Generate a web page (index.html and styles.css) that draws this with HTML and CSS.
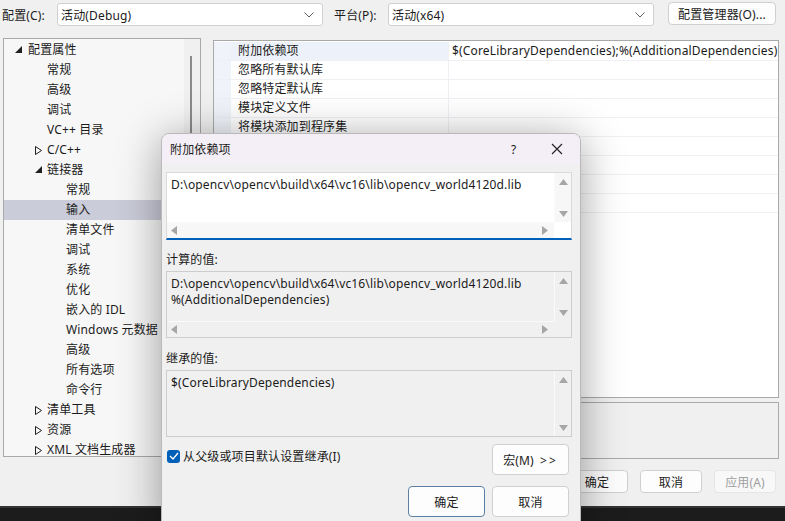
FILE: index.html
```html
<!DOCTYPE html>
<html lang="zh-CN">
<head>
<meta charset="utf-8">
<title>属性页</title>
<link rel="stylesheet" href="styles.css">
</head>
<body>
<div class="window">
  <div class="topbar">
    <span class="lbl">配置(C):</span>
    <div class="combo"><span>活动(Debug)</span><svg class="chev" width="10" height="6" viewBox="0 0 10 6"><polyline points="0.5,0.5 5,5 9.5,0.5" fill="none" stroke="#606060" stroke-width="1"/></svg></div>
    <span class="lbl lbl2">平台(P):</span>
    <div class="combo"><span>活动(x64)</span><svg class="chev" width="10" height="6" viewBox="0 0 10 6"><polyline points="0.5,0.5 5,5 9.5,0.5" fill="none" stroke="#606060" stroke-width="1"/></svg></div>
    <button class="btn cfgmgr">配置管理器(O)...</button>
  </div>

  <div class="main">
    <div class="tree">
      <div class="tree-items">
        <div class="ti t1"><svg class="tri" width="7" height="7" viewBox="0 0 7 7"><polygon points="7,0 7,7 0,7" fill="#202020"/></svg>配置属性</div>
        <div class="ti t2">常规</div>
        <div class="ti t2">高级</div>
        <div class="ti t2">调试</div>
        <div class="ti t2">VC++ 目录</div>
        <div class="ti t2"><svg class="tri" width="7" height="9" viewBox="0 0 7 9"><polygon points="0.5,0.5 6.5,4.5 0.5,8.5" fill="none" stroke="#202020" stroke-width="1"/></svg>C/C++</div>
        <div class="ti t2"><svg class="tri" width="7" height="7" viewBox="0 0 7 7"><polygon points="7,0 7,7 0,7" fill="#202020"/></svg>链接器</div>
        <div class="ti t3">常规</div>
        <div class="ti t3 sel">输入</div>
        <div class="ti t3">清单文件</div>
        <div class="ti t3">调试</div>
        <div class="ti t3">系统</div>
        <div class="ti t3">优化</div>
        <div class="ti t3">嵌入的 IDL</div>
        <div class="ti t3">Windows 元数据</div>
        <div class="ti t3">高级</div>
        <div class="ti t3">所有选项</div>
        <div class="ti t3">命令行</div>
        <div class="ti t2"><svg class="tri" width="7" height="9" viewBox="0 0 7 9"><polygon points="0.5,0.5 6.5,4.5 0.5,8.5" fill="none" stroke="#202020" stroke-width="1"/></svg>清单工具</div>
        <div class="ti t2"><svg class="tri" width="7" height="9" viewBox="0 0 7 9"><polygon points="0.5,0.5 6.5,4.5 0.5,8.5" fill="none" stroke="#202020" stroke-width="1"/></svg>资源</div>
        <div class="ti t2"><svg class="tri" width="7" height="9" viewBox="0 0 7 9"><polygon points="0.5,0.5 6.5,4.5 0.5,8.5" fill="none" stroke="#202020" stroke-width="1"/></svg>XML 文档生成器</div>
      </div>
      <div class="tree-scroll"><div class="thumb"></div></div>
    </div>

    <div class="right">
      <div class="grid">
        <div class="row first"><div class="gut"></div><div class="name">附加依赖项</div><div class="val">$(CoreLibraryDependencies);%(AdditionalDependencies)</div></div>
        <div class="row"><div class="gut"></div><div class="name">忽略所有默认库</div><div class="val"></div></div>
        <div class="row"><div class="gut"></div><div class="name">忽略特定默认库</div><div class="val"></div></div>
        <div class="row"><div class="gut"></div><div class="name">模块定义文件</div><div class="val"></div></div>
        <div class="row"><div class="gut"></div><div class="name">将模块添加到程序集</div><div class="val"></div></div>
        <div class="row"><div class="gut"></div><div class="name"></div><div class="val"></div></div>
        <div class="row"><div class="gut"></div><div class="name"></div><div class="val"></div></div>
        <div class="row"><div class="gut"></div><div class="name"></div><div class="val"></div></div>
        <div class="row"><div class="gut"></div><div class="name"></div><div class="val"></div></div>
        <div class="grid-fill"><div class="gut"></div></div>
      </div>
      <div class="desc"></div>
    </div>
  </div>

  <div class="bottom-buttons">
    <button class="btn bb">确定</button>
    <button class="btn bb">取消</button>
    <button class="btn bb disabled">应用(A)</button>
  </div>
  <div class="darkstrip"></div>

  <div class="dialog">
    <div class="dtitle">
      <span class="dt-text">附加依赖项</span>
      <span class="dt-help">?</span>
      <svg class="dt-close" width="12" height="12" viewBox="0 0 12 12"><path d="M1 1 L11 11 M11 1 L1 11" stroke="#202020" stroke-width="1.1" fill="none"/></svg>
    </div>
    <div class="dbody">
      <div class="edit e1">
        <div class="etext">D:\opencv\opencv\build\x64\vc16\lib\opencv_world4120d.lib</div>
        <div class="vscroll">
          <svg width="9" height="6" viewBox="0 0 9 6"><polygon points="4.5,0 9,6 0,6" fill="#a6a6a6"/></svg>
          <svg width="9" height="6" viewBox="0 0 9 6"><polygon points="0,0 9,0 4.5,6" fill="#a6a6a6"/></svg>
        </div>
        <div class="hscroll">
          <svg width="6" height="9" viewBox="0 0 6 9"><polygon points="0,4.5 6,0 6,9" fill="#a6a6a6"/></svg>
          <svg width="6" height="9" viewBox="0 0 6 9"><polygon points="0,0 6,4.5 0,9" fill="#a6a6a6"/></svg>
        </div>
      </div>

      <div class="dlabel">计算的值:</div>
      <div class="edit e2 ro">
        <div class="etext">D:\opencv\opencv\build\x64\vc16\lib\opencv_world4120d.lib<br>%(AdditionalDependencies)</div>
        <div class="vscroll">
          <svg width="9" height="6" viewBox="0 0 9 6"><polygon points="4.5,0 9,6 0,6" fill="#a6a6a6"/></svg>
          <svg width="9" height="6" viewBox="0 0 9 6"><polygon points="0,0 9,0 4.5,6" fill="#a6a6a6"/></svg>
        </div>
        <div class="hscroll">
          <svg width="6" height="9" viewBox="0 0 6 9"><polygon points="0,4.5 6,0 6,9" fill="#a6a6a6"/></svg>
          <svg width="6" height="9" viewBox="0 0 6 9"><polygon points="0,0 6,4.5 0,9" fill="#a6a6a6"/></svg>
        </div>
      </div>

      <div class="dlabel dlabel3">继承的值:</div>
      <div class="edit e3 ro">
        <div class="etext">$(CoreLibraryDependencies)</div>
        <div class="vscroll full">
          <svg width="9" height="6" viewBox="0 0 9 6"><polygon points="4.5,0 9,6 0,6" fill="#a6a6a6"/></svg>
          <svg width="9" height="6" viewBox="0 0 9 6"><polygon points="0,0 9,0 4.5,6" fill="#a6a6a6"/></svg>
        </div>
      </div>

      <div class="optrow">
        <label class="chk"><span class="box"><svg width="10" height="8" viewBox="0 0 10 8"><polyline points="1,4 4,7 9,1" fill="none" stroke="#fff" stroke-width="1.3"/></svg></span>从父级或项目默认设置继承(I)</label>
        <button class="btn dbtn">宏(M) <span class="gts">&gt;&gt;</span></button>
      </div>
      <div class="okrow">
        <button class="btn dbtn default">确定</button>
        <button class="btn dbtn">取消</button>
      </div>
    </div>
  </div>
</div>
</body>
</html>
```

FILE: styles.css
```css
* { box-sizing: border-box; }
html, body { margin: 0; padding: 0; }
body {
  background: #f0f0f0;
  font-family: "Noto Sans", "Noto Sans CJK SC", sans-serif;
  font-size: 12px;
  letter-spacing: 0.15px;
  color: #1b1b1b;
  width: 785px;
  height: 521px;
  overflow: hidden;
}
.window { position: relative; width: 785px; height: 521px; overflow: hidden; }

.topbar { display: flex; align-items: center; height: 29px; padding-left: 2px; }
.lbl { width: 55px; }
.lbl2 { width: 54px; margin-left: 11px; }
.combo {
  width: 266px; height: 23px; background: #fff; border: 1px solid #d0d0d0; border-radius: 3px;
  display: flex; align-items: center; justify-content: space-between; padding: 0 8px 0 3px;
}
.btn {
  font-family: inherit; font-size: 12px; letter-spacing: 0.15px; color: #1b1b1b; background: #fdfdfd;
  border: 1px solid #d0d0d0; border-radius: 4px; padding: 0; cursor: default;
}
.cfgmgr { width: 108px; height: 23px; margin-left: 14px; margin-top: -2px; }

.main { display: flex; align-items: flex-start; padding-left: 3px; margin-top: 9px; }
.tree {
  width: 198px; height: 419px; border: 1px solid #a9a9a9; background: #f7f7f7;
  display: flex; position: relative;
}
.tree-items { flex: 1; padding-top: 1px; }
.ti { height: 20px; line-height: 20px; position: relative; white-space: nowrap; }
.ti .tri { position: absolute; top: 6px; }
.t1 { padding-left: 24px; }
.t1 .tri { left: 11px; }
.t2 { padding-left: 43px; }
.t2 .tri { left: 31px; }
.t3 { padding-left: 62px; }
.sel { background: #cbccd9; }
.tree-scroll { width: 16px; background: #f0f0f0; padding-top: 17px; }
.thumb { width: 2px; height: 320px; background: #8a8a8a; margin-left: 6px; }

.right { margin-left: 12px; width: 566px; margin-top: 2px; }
.grid { height: 358px; border: 1px solid #a9a9a9; background: #fff; display: flex; flex-direction: column; }
.row { display: flex; height: 19px; line-height: 18px; border-bottom: 1px solid #f0f0f4; }
.row.first { margin-top: 1px; }
.gut { width: 17px; background: #f0f4fa; flex: none; }
.name { width: 218px; padding-left: 7px; border-right: 1px solid #f0f0f4; white-space: nowrap; overflow: hidden; }
.row.first .name { background: #edf2fa; }
.val { flex: 1; padding-left: 3px; white-space: nowrap; overflow: hidden; }
.grid-fill { flex: 1; display: flex; }
.desc { height: 57px; margin-top: 4px; border: 1px solid #a9a9a9; background: #f0f0f0; }

.bottom-buttons { display: flex; justify-content: flex-end; gap: 12px; padding-right: 9px; margin-top: 11px; }
.bb { width: 62px; height: 23px; }
.bb.disabled { color: #a0a0a0; border-color: #e6e6e6; background: #f8f8f8; }
.darkstrip {
  margin-top: 13px; height: 15px; background: #1c1c1c; border-top: 2px solid #333;
}

.dialog {
  position: absolute; left: 161px; top: 133px; width: 420px; height: 400px;
  background: #f0f0f0; border: 1px solid #b9b9b9; border-radius: 8px 8px 0 0;
  box-shadow: 0 6px 44px rgba(0,0,0,0.38);
  overflow: hidden;
}
.dtitle {
  height: 30px; background: #f4eef6; display: flex; align-items: center; padding-left: 8px;
}
.dt-text { flex: 1; }
.dt-help { width: 40px; text-align: left; }
.dt-close { margin-right: 17px; }
.dbody { padding: 8px 8px 0 4px; }
.edit { position: relative; height: 68px; border: 1px solid #dadada; background: #fff; }
.e1 { border-bottom: 2px solid #005fb8; }
.ro { background: #f0f0f0; border-color: #cdcdcd; height: 67px; }
.etext { padding: 4px 0 0 4px; margin-right: 17px; line-height: 16px; white-space: nowrap; overflow: hidden; }
.vscroll {
  position: absolute; right: 0; top: 0; width: 17px; bottom: 16px;
  display: flex; flex-direction: column; justify-content: space-between; align-items: center;
  padding: 6px 0 5px; border-left: 1px solid #fafafa;
}
.vscroll.full { bottom: 0; padding: 6px 0 5px; }
.hscroll {
  position: absolute; left: 0; bottom: 0; right: 17px; height: 16px;
  display: flex; justify-content: space-between; align-items: center; padding: 0 6px 0 4px;
  border-top: 1px solid #fafafa;
}
.e1 .vscroll, .e1 .hscroll { background: #f7f7f7; }
.dlabel { height: 31px; line-height: 18px; padding-top: 11px; }
.dlabel3 { height: 32px; padding-top: 12px; }
.optrow { display: flex; justify-content: space-between; align-items: flex-start; margin-top: 7px; padding-right: 3px; }
.chk { display: flex; align-items: center; gap: 3px; margin-left: 1px; margin-top: 3px; }
.box {
  width: 13px; height: 13px; border-radius: 3px; background: #005fb8;
  display: flex; align-items: center; justify-content: center;
}
.dbtn { width: 77px; height: 31px; }
.gts { letter-spacing: 2px; margin-left: 3px; }
.okrow { display: flex; justify-content: flex-end; gap: 7px; padding-right: 3px; margin-top: 11px; }
.dbtn.default { border-color: #5d7fa6; }
```
